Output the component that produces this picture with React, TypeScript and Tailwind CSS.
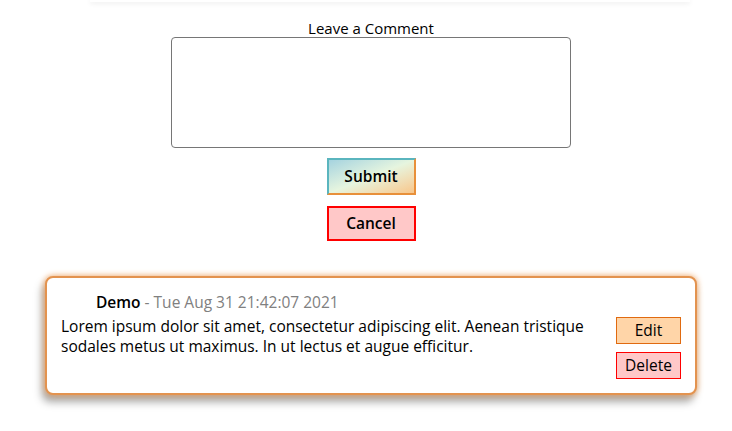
import { useState } from "react";

const Comment = () => {
  return (
    <div className="ml-[45px] w-[652px] rounded-[8px] border-2 border-[#e3934f] bg-white shadow-[0_0_6px_#eea05c,-3px_7px_8px_rgba(0,0,0,0.35)]">
      <div className="flex pl-[14px] pr-[14px] pt-[14px] pb-[14px]">
        <div className="flex-1">
          <div className="pl-[35px] text-[15.5px] leading-[20px]">
            <span className="font-semibold">Demo</span>
            <span className="text-[#808080]"> - Tue Aug 31 21:42:07 2021</span>
          </div>
          <p className="mt-[4px] text-[15.5px] leading-[20px]">
            Lorem ipsum dolor sit amet, consectetur adipiscing elit. Aenean tristique sodales metus ut maximus. In ut lectus et augue efficitur.
          </p>
        </div>
        <div className="ml-[20px] flex flex-col gap-[8px] pt-[25px]">
          <button className="h-[27px] w-[65px] border border-[#e06a10] bg-[#ffd5a8] text-[15.5px]">Edit</button>
          <button className="h-[27px] w-[65px] border border-[#ff0000] bg-[#ffc8c8] text-[15.5px]">Delete</button>
        </div>
      </div>
    </div>
  );
};

export default function App() {
  const [text, setText] = useState("");

  return (
    <div className="min-h-screen bg-white font-['Open_Sans',sans-serif] text-black">
      <div className="ml-[90px] h-[2px] w-[600px] bg-white shadow-[0_1px_5px_rgba(0,0,0,0.12)]" />

      <div className="flex flex-col items-center pl-[10px] pt-[17px]">
        <label htmlFor="comment" className="text-[15px] leading-[18px]">Leave a Comment</label>
        <textarea
          id="comment"
          value={text}
          onChange={(e) => setText(e.target.value)}
          className="h-[111px] w-[400px] resize-none rounded-[4px] border border-[#767676] bg-white"
        />
        <button className="mt-[10px] h-[37px] w-[89px] border-2 border-t-[#5ab5be] border-l-[#5ab5be] border-b-[#e8903a] border-r-[#e8903a] bg-gradient-to-br from-[#a5d3df] via-[#e6f5df] to-[#f8c68a] text-[15.5px] font-semibold">
          Submit
        </button>
        <button className="mt-[11px] h-[35px] w-[89px] border-2 border-[#ff0000] bg-[#ffc8c8] text-[15.5px] font-semibold">
          Cancel
        </button>
      </div>

      <div className="mt-[35px] pb-[30px]">
        <Comment />
      </div>
    </div>
  );
}
